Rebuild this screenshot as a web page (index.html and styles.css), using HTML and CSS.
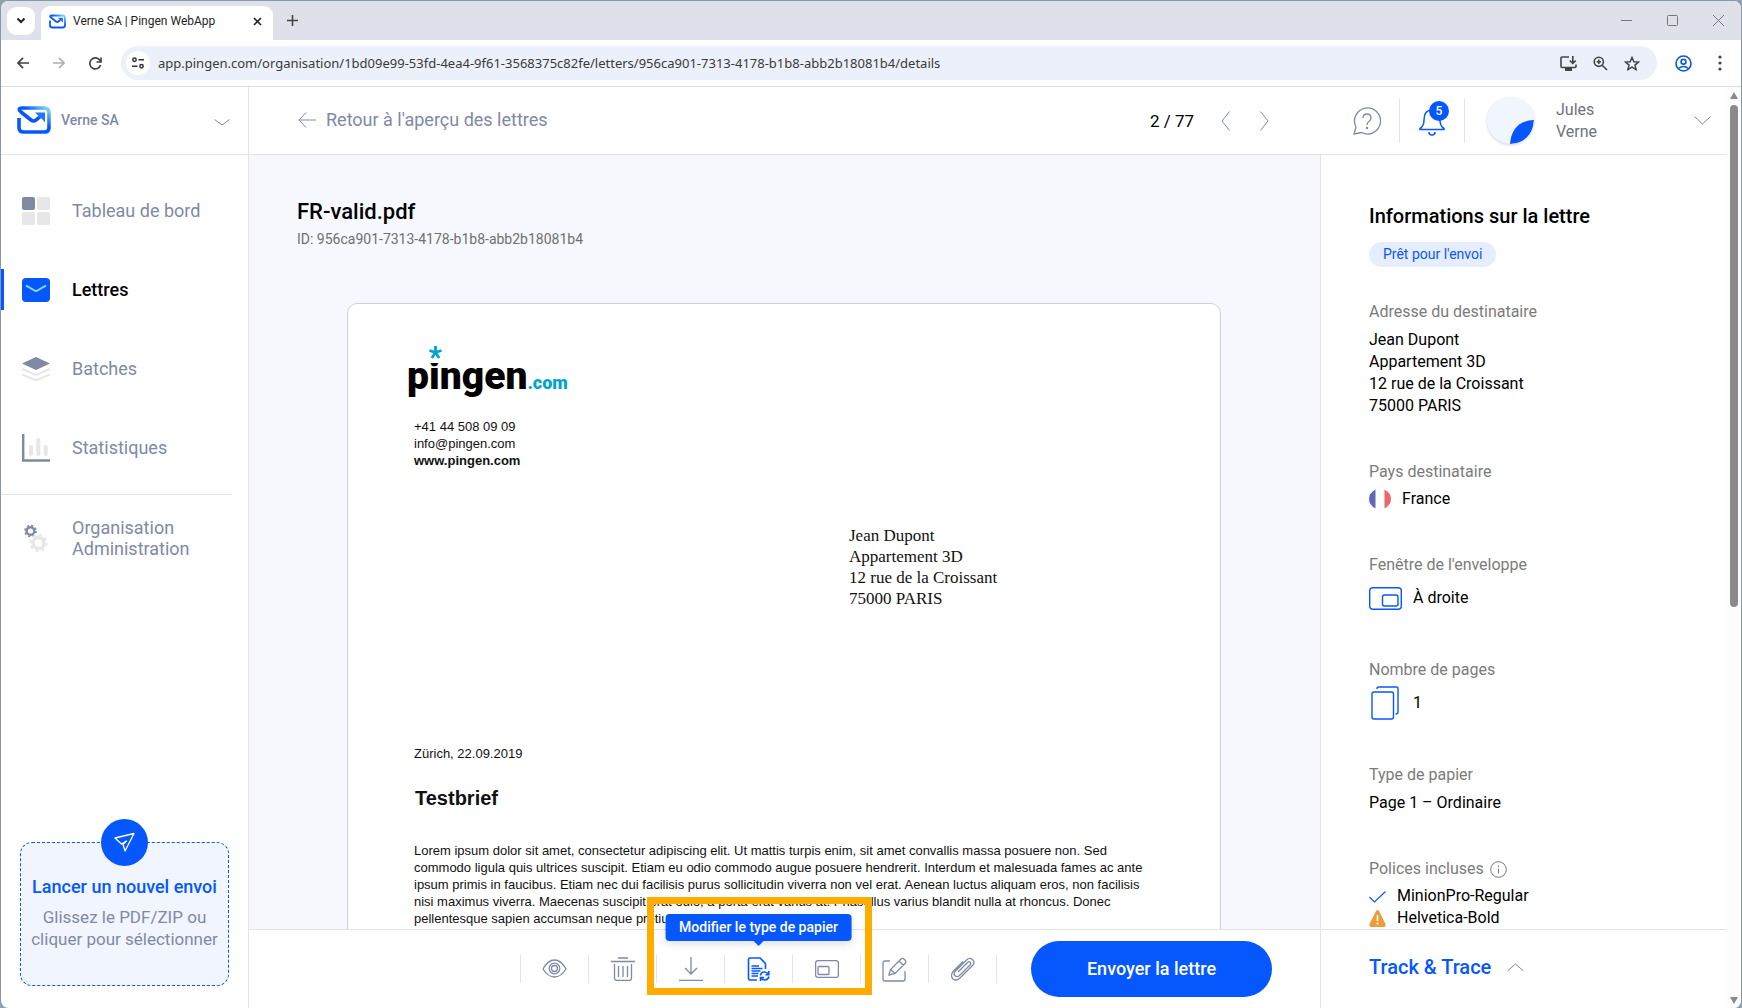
FILE: index.html
```html
<!DOCTYPE html>
<html lang="fr">
<head>
<meta charset="utf-8">
<title>Verne SA | Pingen WebApp</title>
<link rel="stylesheet" href="styles.css">
</head>
<body>
<svg class="defs" aria-hidden="true">
  <defs>
    <linearGradient id="brand" x1="0" y1="1" x2="1" y2="0">
      <stop offset="0.6" stop-color="#0757ff"/>
      <stop offset="1" stop-color="#8be0e6"/>
    </linearGradient>
    <symbol id="logo" viewBox="0 0 34 28">
      <path d="M2 12V21.500Q2 26 6.500 26H27.500Q32 26 32 21.500V6.500Q32 2 27.500 2H5Q0 2.500 4 6L14 14Q16.500 16 19 14L25.500 8.500" fill="none" stroke="url(#brand)" stroke-width="3.600"/>
      <path d="M18 6.500H28V16.500L25 13L21.500 10Z" fill="#1f78fb"/>
    </symbol>
  </defs>
</svg>
<div class="window">
  <div class="tabstrip">
    <button class="tab-search" aria-label="Rechercher des onglets"><svg width="10" height="7" viewBox="0 0 10 7"><path d="M1.500 1.500L5 5L8.500 1.500" fill="none" stroke="#222" stroke-width="2"/></svg></button>
    <div class="tab">
      <svg class="tab-icon" width="17" height="15"><use href="#logo"/></svg>
      <span class="tab-title">Verne SA | Pingen WebApp</span>
      <button class="plain" aria-label="Fermer l'onglet"><svg width="9" height="9" viewBox="0 0 9 9"><path d="M1 1L8 8M8 1L1 8" stroke="#222" stroke-width="1.600"/></svg></button>
    </div>
    <button class="plain new-tab" aria-label="Nouvel onglet"><svg width="11" height="11" viewBox="0 0 11 11"><path d="M5.500 0V11M0 5.500H11" stroke="#444" stroke-width="1.600"/></svg></button>
    <div class="window-buttons">
      <button class="plain" aria-label="Réduire"><svg width="11" height="11" viewBox="0 0 11 11"><path d="M0 5.500H11" stroke="#777"/></svg></button>
      <button class="plain" aria-label="Agrandir"><svg width="11" height="11" viewBox="0 0 11 11"><rect x=".5" y=".5" width="10" height="10" rx="1" fill="none" stroke="#777"/></svg></button>
      <button class="plain" aria-label="Fermer"><svg width="11" height="11" viewBox="0 0 11 11"><path d="M0 0L11 11M11 0L0 11" stroke="#777"/></svg></button>
    </div>
  </div>

  <div class="toolbar">
    <button class="plain" aria-label="Précédent"><svg width="12" height="12" viewBox="0 0 12 12"><path d="M12 6H1M6 .8L1 6L6 11.200" fill="none" stroke="#444" stroke-width="1.700"/></svg></button>
    <button class="plain" aria-label="Suivant"><svg width="12" height="12" viewBox="0 0 12 12"><path d="M0 6H11M6 .8L11 6L6 11.200" fill="none" stroke="#b0b0b0" stroke-width="1.700"/></svg></button>
    <button class="plain" aria-label="Actualiser"><svg width="13" height="13" viewBox="0 0 13 13"><path d="M11.600 8A5.500 5.500 0 1 1 10.800 3.200L12 4.500M12 .5V5H7.500" fill="none" stroke="#444" stroke-width="1.700"/></svg></button>
    <div class="address-bar">
      <button class="plain site-info" aria-label="Informations sur le site"><svg width="12" height="12" viewBox="0 0 12 12"><g fill="none" stroke="#333" stroke-width="1.500"><circle cx="2.500" cy="2.800" r="1.700"/><circle cx="9.500" cy="9.200" r="1.700"/><path d="M6.500 2.800H12M0 9.200H5.500"/></g></svg></button>
      <input class="url" aria-label="Adresse" value="app.pingen.com/organisation/1bd09e99-53fd-4ea4-9f61-3568375c82fe/letters/956ca901-7313-4178-b1b8-abb2b18081b4/details">
      <button class="plain" aria-label="Installer"><svg width="17" height="15" viewBox="0 0 17 15"><path d="M9 1H2Q1 1 1 2V10.500Q1 11.500 2 11.500H15Q16 11.500 16 10.500V8.500M12.800 0V7M9.800 4.500L12.800 7.300L15.800 4.500" fill="none" stroke="#444" stroke-width="1.600"/><path d="M5 12H12V15H5Z" fill="#444"/></svg></button>
      <button class="plain" aria-label="Zoom"><svg width="15" height="15" viewBox="0 0 15 15"><g fill="none" stroke="#444" stroke-width="1.600"><circle cx="5.800" cy="5.800" r="4.600"/><path d="M9.200 9.200L14 14M5.800 3.600V8M3.600 5.800H8"/></g></svg></button>
      <button class="plain" aria-label="Favori"><svg width="16" height="15" viewBox="0 0 16 15"><path d="M8 1.500L9.900 5.700L14.500 6.100L11 9.100L12.100 13.600L8 11.200L3.900 13.600L5 9.100L1.500 6.100L6.100 5.700Z" fill="none" stroke="#444" stroke-width="1.500"/></svg></button>
    </div>
    <button class="plain" aria-label="Profil"><svg width="17" height="17" viewBox="0 0 17 17"><g fill="none" stroke="#0b57d0" stroke-width="1.600"><circle cx="8.500" cy="8.500" r="7.500"/><circle cx="8.500" cy="6.700" r="2.400"/><path d="M3.500 13.500Q8.500 9.500 13.500 13.500"/></g></svg></button>
    <button class="plain menu" aria-label="Menu"><svg width="4" height="16" viewBox="0 0 4 16"><g fill="#444"><circle cx="2" cy="2" r="1.600"/><circle cx="2" cy="8" r="1.600"/><circle cx="2" cy="14" r="1.600"/></g></svg></button>
  </div>

  <div class="app">
    <aside class="sidebar">
      <button class="organisation">
        <svg width="34" height="28"><use href="#logo"/></svg>
        <span class="grow">Verne SA</span>
        <svg class="organisation-arrow" width="16" height="7" viewBox="0 0 16 7"><path d="M.5 .5L8 6L15.500 .5" fill="none" stroke="#8089a6"/></svg>
      </button>
      <nav class="nav">
        <a class="nav-link" href="#"><svg width="28" height="28" viewBox="0 0 28 28"><rect width="13" height="13" rx="2" fill="#8089a3"/><g fill="#e7e7e8"><rect x="15" width="13" height="13" rx="2"/><rect y="15" width="13" height="13" rx="2"/><rect x="15" y="15" width="13" height="13" rx="2"/></g></svg>Tableau de bord</a>
        <a class="nav-link active" href="#"><svg width="28" height="24" viewBox="0 0 28 24"><rect width="28" height="24" rx="4" fill="#0757ff"/><path d="M4 7.500L12.500 12.500Q14 13.500 15.500 12.500L24 7.500" fill="none" stroke="#8be0e6" stroke-width="2"/></svg>Lettres</a>
        <a class="nav-link" href="#"><svg width="28" height="24" viewBox="0 0 28 24"><path d="M14 0L28 6.500L14 13L0 6.500Z" fill="#8089a3"/><path d="M0 12L14 18L28 12M0 17.500L14 23.500L28 17.500" fill="none" stroke="#e7e7e8" stroke-width="2"/></svg>Batches</a>
        <a class="nav-link" href="#"><svg width="28" height="28" viewBox="0 0 28 28"><path d="M1.200 0V26.500H28" fill="none" stroke="#8089a3" stroke-width="2.400"/><path d="M9 13V20M16.300 6V20M23.700 13V20" stroke="#e7e7e8" stroke-width="4" stroke-linecap="round"/></svg>Statistiques</a>
        <a class="nav-link admin" href="#"><svg width="28" height="28" viewBox="0 0 28 28"><circle cx="8.500" cy="7" r="3.800" fill="none" stroke="#8089a3" stroke-width="2.400"/><circle cx="8.500" cy="7" r="5.500" fill="none" stroke="#8089a3" stroke-width="1.600" stroke-dasharray="2.200 2.120"/><circle cx="16.500" cy="19" r="5.500" fill="none" stroke="#e7e7e8" stroke-width="3.400"/><circle cx="16.500" cy="19" r="8" fill="none" stroke="#e7e7e8" stroke-width="2" stroke-dasharray="3.200 3.080"/></svg><span>Organisation<br>Administration</span></a>
      </nav>
      <button class="dropzone">
        <span class="send-icon"><svg width="22" height="22" viewBox="0 0 22 22"><path d="M1 6L20 1.500L11 19L9 12.500L12.500 9L7.500 12Z" fill="none" stroke="#fff" stroke-width="1.300" stroke-linejoin="round"/></svg></span>
        <span class="drop-title">Lancer un nouvel envoi</span>
        <span class="drop-text">Glissez le PDF/ZIP ou cliquer pour sélectionner</span>
      </button>
    </aside>

    <div class="content">
      <header class="header">
        <a class="back" href="#"><svg width="18" height="16" viewBox="0 0 18 16"><path d="M18 8H1M8 .5L1 8L8 15.500" fill="none" stroke="#8089a6"/></svg>Retour à l'aperçu des lettres</a>
        <div class="pager">
          <span class="count">2 / 77</span>
          <button class="plain" aria-label="Lettre précédente"><svg width="9" height="20" viewBox="0 0 9 20"><path d="M8.500 .5L1 10L8.500 19.500" fill="none" stroke="#8089a6"/></svg></button>
          <button class="plain" aria-label="Lettre suivante"><svg width="9" height="20" viewBox="0 0 9 20"><path d="M.5 .5L8 10L.5 19.500" fill="none" stroke="#8089a6"/></svg></button>
        </div>
        <button class="plain help" aria-label="Aide"><svg width="28" height="29" viewBox="0 0 28 29"><g fill="none" stroke="#8089a6" stroke-width="1.300"><path d="M1 28L3 21A13 13 0 1 1 8.500 26.500Z" stroke-linejoin="round"/><path d="M10 12Q10 8 14 8T18 12Q18 14 16 15.500Q14 16.700 14 19"/></g><circle cx="14" cy="22" r="1.200" fill="#8089a6"/></svg></button>
        <button class="plain bell" aria-label="Notifications"><svg width="26" height="30" viewBox="0 0 26 30"><path d="M1 22.500Q5 20 5 14Q5 4 13 4T21 14Q21 20 25 22.500V23.500H1ZM10 26Q10 29 13 29T16 26" fill="none" stroke="#0757ff" stroke-width="1.500"/></svg><span class="bell-count">5</span></button>
        <button class="user"><span class="avatar"><svg width="24" height="24" viewBox="0 0 24 24"><path d="M24 0Q2 1 0 24Q22 23 24 0Z" fill="#0757ff"/></svg></span><span class="grow">Jules<br>Verne</span><svg width="17" height="9" viewBox="0 0 17 9"><path d="M.5 .5L8.500 8L16.500 .5" fill="none" stroke="#8089a6"/></svg></button>
      </header>

      <main class="viewer">
        <div class="preview">
          <h1 class="file-name">FR-valid.pdf</h1>
          <p class="file-id">ID: 956ca901-7313-4178-b1b8-abb2b18081b4</p>
          <article class="sheet">
            <div class="brand"><span class="brand-name">pingen</span><span class="brand-tld">.com</span><svg class="brand-star" width="13" height="17" viewBox="0 0 13 17"><rect y="7" width="13" height="10" fill="#fff"/><path d="M6.500 6.500V0M6.500 6.500L.5 4.500M6.500 6.500L12.500 4.500M6.500 6.500L2.800 12M6.500 6.500L10.200 12" stroke="#00a4d3" stroke-width="2.800"/></svg></div>
            <p class="contact">+41 44 508 09 09<br>info@pingen.com<br><b>www.pingen.com</b></p>
            <address class="recipient">Jean Dupont<br>Appartement 3D<br>12 rue de la Croissant<br>75000 PARIS</address>
            <p class="date">Zürich, 22.09.2019</p>
            <h2 class="subject">Testbrief</h2>
            <p class="letter-text">Lorem ipsum dolor sit amet, consectetur adipiscing elit. Ut mattis turpis enim, sit amet convallis massa posuere non. Sed<br>commodo ligula quis ultrices suscipit. Etiam eu odio commodo augue posuere hendrerit. Interdum et malesuada fames ac ante<br>ipsum primis in faucibus. Etiam nec dui facilisis purus sollicitudin viverra non vel erat. Aenean luctus aliquam eros, non facilisis<br>nisi maximus viverra. Maecenas suscipit erat odio, a porta erat varius at. Phasellus varius blandit nulla at rhoncus. Donec<br>pellentesque sapien accumsan neque pretium erat.</p>
          </article>
        </div>
        <div class="actions">
          <div class="tools">
            <button class="tool" aria-label="Aperçu"><svg width="25" height="20" viewBox="0 0 25 20"><path d="M1 10Q6 1 12.500 1T24 10Q19 18 12.500 18T1 10Z"/><circle cx="12.500" cy="9.500" r="5.300"/><circle cx="12.500" cy="9.500" r="3"/></svg></button>
            <button class="tool" aria-label="Supprimer"><svg width="24" height="24" viewBox="0 0 24 24"><path d="M7 1H17M0 4.500H24M3.500 7V21Q3.500 23.500 6 23.500H18Q20.500 23.500 20.500 21V7M7.500 9V20M12 9V20M16.500 9V20"/></svg></button>
            <button class="tool" aria-label="Télécharger"><svg width="24" height="24" viewBox="0 0 24 24"><path d="M12 0V17M6 11L12 17L18 11M0 23.300H24"/></svg></button>
            <button class="tool selected" aria-label="Modifier le type de papier"><svg width="24" height="24" viewBox="0 0 24 24"><path d="M10 23H3Q1.500 23 1.500 21.500V2.500Q1.500 1 3 1H13L18.500 6.500V12M4.500 9H12M4.500 11.500H15.500M4.500 14H13.500M4.500 16.500H11.500M4.500 19H11"/><path d="M13.500 18.500Q14 15 17.500 15Q20 15 21.500 17.500M21.800 14V17.700H18.500M22 19.500Q21 23 18 23Q15 23 14 20.500M13.500 24V20.500H17"/></svg><span class="tooltip" role="tooltip">Modifier le type de papier</span></button>
            <button class="tool" aria-label="Fenêtre de l'enveloppe"><svg width="24" height="18" viewBox="0 0 24 18"><rect x=".6" y=".6" width="22.800" height="16.800" rx="2.500"/><rect x="3" y="6.500" width="11" height="8" rx="1"/></svg></button>
            <button class="tool" aria-label="Modifier"><svg width="25" height="25" viewBox="0 0 25 25"><path d="M8 4H3Q1 4 1 6V22Q1 24 3 24H21Q23 24 23 22V14M7 18L8.500 12.500L19 2Q20.500 .5 22.500 2.500T23.500 6L13 16.500ZM17 4L21.500 8.500M8.500 12.500L13 16.500"/></svg></button>
            <button class="tool" aria-label="Pièce jointe"><svg width="24" height="24" viewBox="0 0 24 24"><path d="M7 15L16.500 5.500Q18 4 19.200 5.200T19 8L8.500 18.500Q6 20.500 4 18.700T4.500 14L15.500 3Q18 .5 20.500 1.800Q24.500 4.500 22 8L9 21Q5 24.500 2 22Q-1 19 2 14.500L12 4.500"/></svg></button>
            <div class="highlight"></div>
          </div>
          <button class="send">Envoyer la lettre</button>
        </div>
      </main>

      <aside class="details">
        <div class="details-body">
          <h2 class="details-title">Informations sur la lettre</h2>
          <span class="status">Prêt pour l'envoi</span>
          <dl class="facts">
            <div class="fact"><dt>Adresse du destinataire</dt><dd class="spaced">Jean Dupont<br>Appartement 3D<br>12 rue de la Croissant<br>75000 PARIS</dd></div>
            <div class="fact"><dt>Pays destinataire</dt><dd class="with-icon country"><svg width="22" height="22" viewBox="0 0 22 22"><path d="M6.500 1.500Q0 5 0 11T6.500 20.500Z" fill="#6568b9"/><path d="M15.500 1.500Q22 5 22 11T15.500 20.500Z" fill="#ef646d"/></svg>France</dd></div>
            <div class="fact"><dt>Fenêtre de l'enveloppe</dt><dd class="with-icon tall"><svg width="33" height="23" viewBox="0 0 33 23"><g fill="none" stroke="#0757ff" stroke-width="1.400"><rect x=".7" y=".7" width="31.600" height="21.600" rx="3"/><rect x="13.500" y="8" width="15.500" height="11" rx="2"/></g></svg>À droite</dd></div>
            <div class="fact"><dt>Nombre de pages</dt><dd class="with-icon tall"><svg width="33" height="34" viewBox="0 0 33 34"><g fill="none" stroke="#0757ff" stroke-width="1.400"><rect x="3" y="6" width="21.500" height="27" rx="2"/><path d="M8 3V2.500Q8 1 9.500 1H27.500Q29 1 29 2.500V26Q29 28 26.500 28"/></g></svg>1</dd></div>
            <div class="fact"><dt>Type de papier</dt><dd class="spaced">Page 1 – Ordinaire</dd></div>
            <div class="fact"><dt class="with-info">Polices incluses <svg width="17" height="17" viewBox="0 0 17 17"><circle cx="8.500" cy="8.500" r="7.800" fill="none" stroke="#777"/><path d="M8.500 7.500V12.500M8.500 4.500V6" stroke="#777"/></svg></dt>
            <dd class="with-icon first"><svg width="17" height="17" viewBox="0 0 17 17"><path d="M.5 9L5.500 14L16.500 3.500" fill="none" stroke="#0757ff" stroke-width="1.200"/></svg>MinionPro-Regular</dd>
            <dd class="with-icon"><svg width="17" height="17" viewBox="0 0 17 17"><path d="M7 1Q8.500-.8 10 1L16.500 14Q17 17 15 17H2Q0 17 .5 14Z" fill="#ee9b3a"/><path d="M8.500 5V11M8.500 12.500V14.500" stroke="#fff" stroke-width="1.600"/></svg>Helvetica-Bold</dd></div>
          </dl>
        </div>
        <button class="track">Track &amp; Trace <svg width="17" height="9" viewBox="0 0 17 9"><path d="M.5 8L8.500 1L16.500 8" fill="none" stroke="#8089a6"/></svg></button>
      </aside>
    </div>

    <div class="scrollbar">
      <svg width="8" height="7" viewBox="0 0 8 7"><path d="M4 0L8 7H0Z" fill="#8a8a8a"/></svg>
      <div class="thumb"></div>
      <svg width="8" height="7" viewBox="0 0 8 7"><path d="M0 0H8L4 7Z" fill="#8a8a8a"/></svg>
    </div>
  </div>
</div>
</body>
</html>
```
FILE: styles.css
```css
* { box-sizing: border-box; }
body { margin: 0; background: #8fa1b0; font: 16px/22px Roboto, sans-serif; color: #000; }
h1, h2, p, dl, dd, address { margin: 0; font-style: normal; }
button { font: inherit; color: inherit; background: none; border: 0; padding: 0; text-align: left; cursor: pointer; }
a { color: inherit; text-decoration: none; }
svg { display: block; flex: none; }
.defs { position: absolute; width: 0; height: 0; }
.plain { display: flex; align-items: center; }
.grow { flex: 1; }

.window { height: 100vh; display: flex; flex-direction: column; background: #fff; border: solid #8798a8; border-width: 1px 1px 0; border-radius: 8px; overflow: hidden; }

/* Browser chrome */
.tabstrip { height: 39px; flex: none; display: flex; align-items: center; padding-left: 6px; background: #dee1e9; }
.tab-search { width: 28px; height: 28px; display: grid; place-items: center; border-radius: 9px; background: #fff; }
.tab { width: 232px; height: 34px; margin-left: 6px; align-self: flex-end; display: flex; align-items: center; padding: 0 11px 4px 8px; border-radius: 9px 9px 0 0; background: #fff; }
.tab-title { flex: 1; margin-left: 7px; font-size: 12px; line-height: 16px; color: #1f1f1f; white-space: nowrap; }
.new-tab { margin-left: 14px; }
.window-buttons { margin-left: auto; display: flex; gap: 35px; padding-right: 17px; }
.toolbar { height: 47px; flex: none; display: flex; align-items: center; gap: 24px; padding: 0 19px 0 16px; border-bottom: 1px solid #dedede; }
.address-bar { flex: 1; height: 34px; margin: 0 -6px 0 -5px; display: flex; align-items: center; gap: 16px; padding: 0 17px 0 5px; border-radius: 17px; background: #ecf0fa; }
.site-info { width: 24px; height: 24px; justify-content: center; border-radius: 50%; background: #fff; }
.url { flex: 1; min-width: 0; margin-left: -8px; padding: 0; border: 0; background: none; font: 13px/20px "Noto Sans", sans-serif; color: #3a3a3a; }
.menu { margin-left: 2px; }

/* Application frame */
.app { flex: 1; min-height: 0; display: flex; }
.sidebar { width: 248px; flex: none; display: flex; flex-direction: column; border-right: 1px solid #e4e4e6; color: #8089a6; }
.organisation { height: 68px; display: flex; align-items: center; gap: 10px; padding: 0 18px 1px 16px; border-bottom: 1px solid #e4e4e6; font-size: 14px; font-weight: 500; }
.organisation-arrow { margin-top: 4px; }
.nav { padding-top: 16px; }
.nav-link { height: 79px; display: flex; align-items: center; gap: 22px; padding-left: 21px; font-size: 18px; line-height: 21px; }
.nav-link.active { color: #000; font-weight: 500; background: linear-gradient(#0757ff, #0757ff) left center / 3px 41px no-repeat; }
.nav-link.admin { height: 87px; margin: 7px 17px 0 0; border-top: 1px solid #e4e4e6; }
.dropzone { height: 144px; margin: auto 19px 22px; display: flex; flex-direction: column; align-items: center; text-align: center; border: 1px dashed #0757ff; border-radius: 12px; background: #f1f5fe; }
.send-icon { width: 47px; height: 47px; flex: none; margin-top: -24px; display: grid; place-items: center; border-radius: 50%; background: #0757ff; }
.drop-title { margin: 10px 0 8px; font-size: 18px; font-weight: 500; color: #0757ff; white-space: nowrap; }
.drop-text { padding: 0 10px; font-size: 17px; }

.content { flex: 1; min-width: 0; display: grid; grid-template-columns: 1fr 407px; grid-template-rows: 68px 1fr; }
.header { grid-column: 1 / -1; display: flex; align-items: center; padding: 0 16px 0 49px; border-bottom: 1px solid #e4e4e6; }
.back { flex: 1; display: flex; align-items: center; gap: 10px; padding-bottom: 2px; font-size: 18px; color: #8089a6; }
.pager { display: flex; align-items: center; gap: 30px; margin-right: 84px; }
.count { font-size: 17px; margin-right: -3px; }
.help { margin-right: 18px; }
.bell { position: relative; height: 44px; padding: 0 19px; border: solid #e4e4e6; border-width: 0 1px; }
.bell-count { position: absolute; left: 29px; top: 2px; width: 20px; height: 20px; border-radius: 50%; background: #0757ff; color: #fff; font: 500 12px/20px Roboto, sans-serif; text-align: center; }
.user { width: 224px; margin-left: 22px; display: flex; align-items: center; color: #6f7280; }
.avatar { width: 47px; height: 47px; margin-right: 22px; display: flex; align-items: flex-end; justify-content: flex-end; overflow: hidden; border-radius: 50%; background: #f1f5fe; box-shadow: 0 1px 3px #ccd3e2; }

/* Letter preview */
.viewer { min-width: 0; min-height: 0; display: flex; flex-direction: column; }
.preview { flex: 1; min-height: 0; overflow: hidden; padding: 44px 99px 0 98px; background: #f6f8fd; }
.file-name { margin-left: -50px; font-size: 22px; line-height: 26px; font-weight: 500; }
.file-id { margin: 4px 0 0 -50px; font-size: 14px; line-height: 20px; color: #707070; }
.sheet { margin-top: 54px; aspect-ratio: 210 / 297; padding: 39px 60px; border: 1px solid #ccd0df; border-radius: 10px; background: #fff; font: 13px/17px "Liberation Sans", Arial, sans-serif; color: #111; white-space: nowrap; }
.brand { position: relative; height: 60px; margin-left: -1px; padding-top: 6px; line-height: 54px; }
.brand-name { font: 900 39px/54px Impact, Roboto, sans-serif; color: #000; }
.brand-tld { font: 900 18px/54px Impact, Roboto, sans-serif; color: #00a4d3; }
.brand-star { position: absolute; left: 22px; top: 3px; }
.contact { margin: 15px 0 0 6px; }
.recipient { margin: 56px 0 0 441px; font: 17px/21px "Liberation Serif", "Times New Roman", serif; }
.date { margin: 136px 0 0 6px; }
.subject { margin: 24px 0 0 7px; font-size: 20px; line-height: 24px; }
.letter-text { margin: 32px 0 0 6px; }
.actions { height: 79px; flex: none; display: flex; align-items: center; justify-content: flex-end; gap: 34px; padding-right: 48px; border-top: 1px solid #e4e4e6; background: #fff; }
.tools { position: relative; display: flex; border-left: 1px solid #e4e4e6; }
.tool { position: relative; width: 68px; height: 28px; display: grid; place-items: center; border-right: 1px solid #e4e4e6; }
.tool svg { fill: none; stroke: #8089a6; stroke-width: 1.3; }
.tool.selected svg { stroke: #0757ff; stroke-width: 1.6; }
.tooltip { position: absolute; z-index: 2; left: 50%; bottom: 42px; transform: translateX(-50%); height: 27px; padding: 0 14px; border-radius: 4px; background: #0757ff; color: #fff; font-size: 14px; font-weight: 500; line-height: 26px; white-space: nowrap; box-shadow: 0 3px 8px #0002; }
.tooltip::after { content: ""; position: absolute; left: 50%; top: 100%; margin-left: -5px; border: solid transparent; border-width: 5px 5px 0; border-top-color: #0757ff; }
.highlight { position: absolute; z-index: 1; left: 126px; top: -58px; width: 225px; height: 98px; border: 7px solid #ffab00; pointer-events: none; }
.send { width: 241px; height: 56px; border-radius: 28px; background: #0757ff; color: #fff; font-size: 18px; font-weight: 500; text-align: center; }

/* Letter details */
.details { min-height: 0; display: flex; flex-direction: column; border-left: 1px solid #e4e4e6; }
.details-body { flex: 1; min-height: 0; overflow: hidden; padding: 48px 20px 0 48px; }
.details-title { font-size: 20px; line-height: 26px; font-weight: 500; }
.status { display: inline-block; height: 25px; margin-top: 13px; padding: 0 14px; border-radius: 13px; background: #e5edff; color: #0757ff; font-size: 14px; line-height: 24px; vertical-align: top; }
.facts { margin-top: 34px; }
.fact { margin-bottom: 44px; }
.fact dt { color: #7b7b7b; }
.spaced { margin-top: 6px; }
.with-icon { display: flex; align-items: center; gap: 11px; }
.country { margin-top: 5px; }
.tall { height: 34px; margin-top: 5px; }
.with-info { display: flex; align-items: center; gap: 6px; }
.first { margin-top: 5px; }
.track { height: 79px; flex: none; display: flex; align-items: center; gap: 16px; padding: 0 0 4px 48px; border-top: 1px solid #e4e4e6; color: #0757ff; font-size: 20px; font-weight: 500; }

.scrollbar { width: 14px; flex: none; display: flex; flex-direction: column; align-items: center; padding: 5px 0 4px; background: #fcfcfc; }
.thumb { width: 8px; height: 55%; margin: 6px 0 auto; border-radius: 4px; background: #8a8a8a; }
```
